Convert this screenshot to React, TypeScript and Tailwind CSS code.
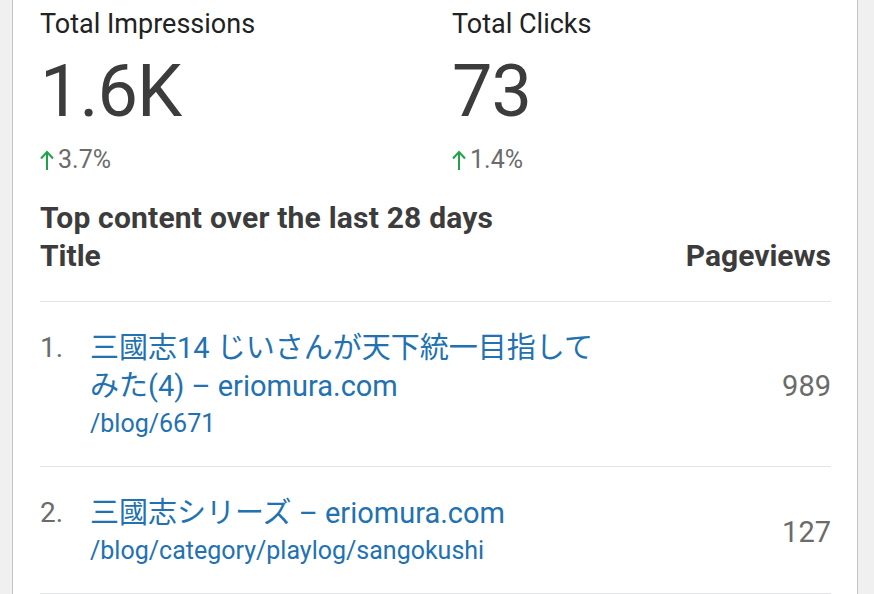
import React from 'react';

const rows = [
  {
    rank: 1,
    title: '三國志14 じいさんが天下統一目指してみた(4) – eriomura.com',
    path: '/blog/6671',
    views: 989,
  },
  {
    rank: 2,
    title: '三國志シリーズ – eriomura.com',
    path: '/blog/category/playlog/sangokushi',
    views: 127,
  },
];

const ArrowUp = () => (
  <svg viewBox="0 0 14 20" className="w-[14px] h-[20px] mr-[4px]" fill="none" stroke="#1fa34a" strokeWidth="2">
    <path d="M7 2.5V20M1 8.5l6-6.5 6 6.5" />
  </svg>
);

const Metric = ({ label, value, change }: { label: string; value: string; change: string }) => (
  <div className="w-[412px] shrink-0">
    <div className="text-[27px] leading-[48px] text-[#222222]">{label}</div>
    <div className="text-[72px] leading-[88px] text-[#3c3c3c] tracking-[-1px]">{value}</div>
    <div className="flex items-center text-[25px] leading-[48px] text-[#6b6b6b]">
      <ArrowUp />
      {change}
    </div>
  </div>
);

export default function App() {
  return (
    <div
      className="min-h-screen bg-[#f0f0f1] pl-3 pr-4 overflow-hidden"
      style={{ fontFamily: 'Roboto, "Noto Sans CJK JP", sans-serif' }}
    >
      <div className="bg-white border-x border-[#c3c4c7] min-h-[594px] pl-[27px] pr-[26px]">
        {/* Metrics */}
        <div className="flex">
          <Metric label="Total Impressions" value="1.6K" change="3.7%" />
          <Metric label="Total Clicks" value="73" change="1.4%" />
        </div>

        {/* Top content */}
        <div className="pt-[15px] pb-[26px] border-b border-[#e2e4e7]">
          <div className="text-[30px] leading-[38px] font-bold text-[#3c3c3c] tracking-[0.2px]">
            Top content over the last 28 days
          </div>
          <div className="flex justify-between text-[30px] leading-[38px] font-bold text-[#3c3c3c]">
            <span>Title</span>
            <span>Pageviews</span>
          </div>
        </div>

        {rows.map((r) => (
          <div
            key={r.rank}
            className="flex items-center justify-between pt-[27px] pb-[23px] border-b border-[#e2e4e7]"
          >
            <div className="flex">
              <span className="w-[50px] shrink-0 text-[28px] leading-[38px] text-[#6b6b6b]">
                {r.rank}.
              </span>
              <div className="w-[510px]">
                <div className="text-[29px] leading-[38px] text-[#2271b1]">{r.title}</div>
                <div className="text-[25px] leading-[38px] text-[#2271b1]">{r.path}</div>
              </div>
            </div>
            <span className="text-[29px] leading-[38px] text-[#6b6b6b]">{r.views}</span>
          </div>
        ))}
      </div>
    </div>
  );
}
